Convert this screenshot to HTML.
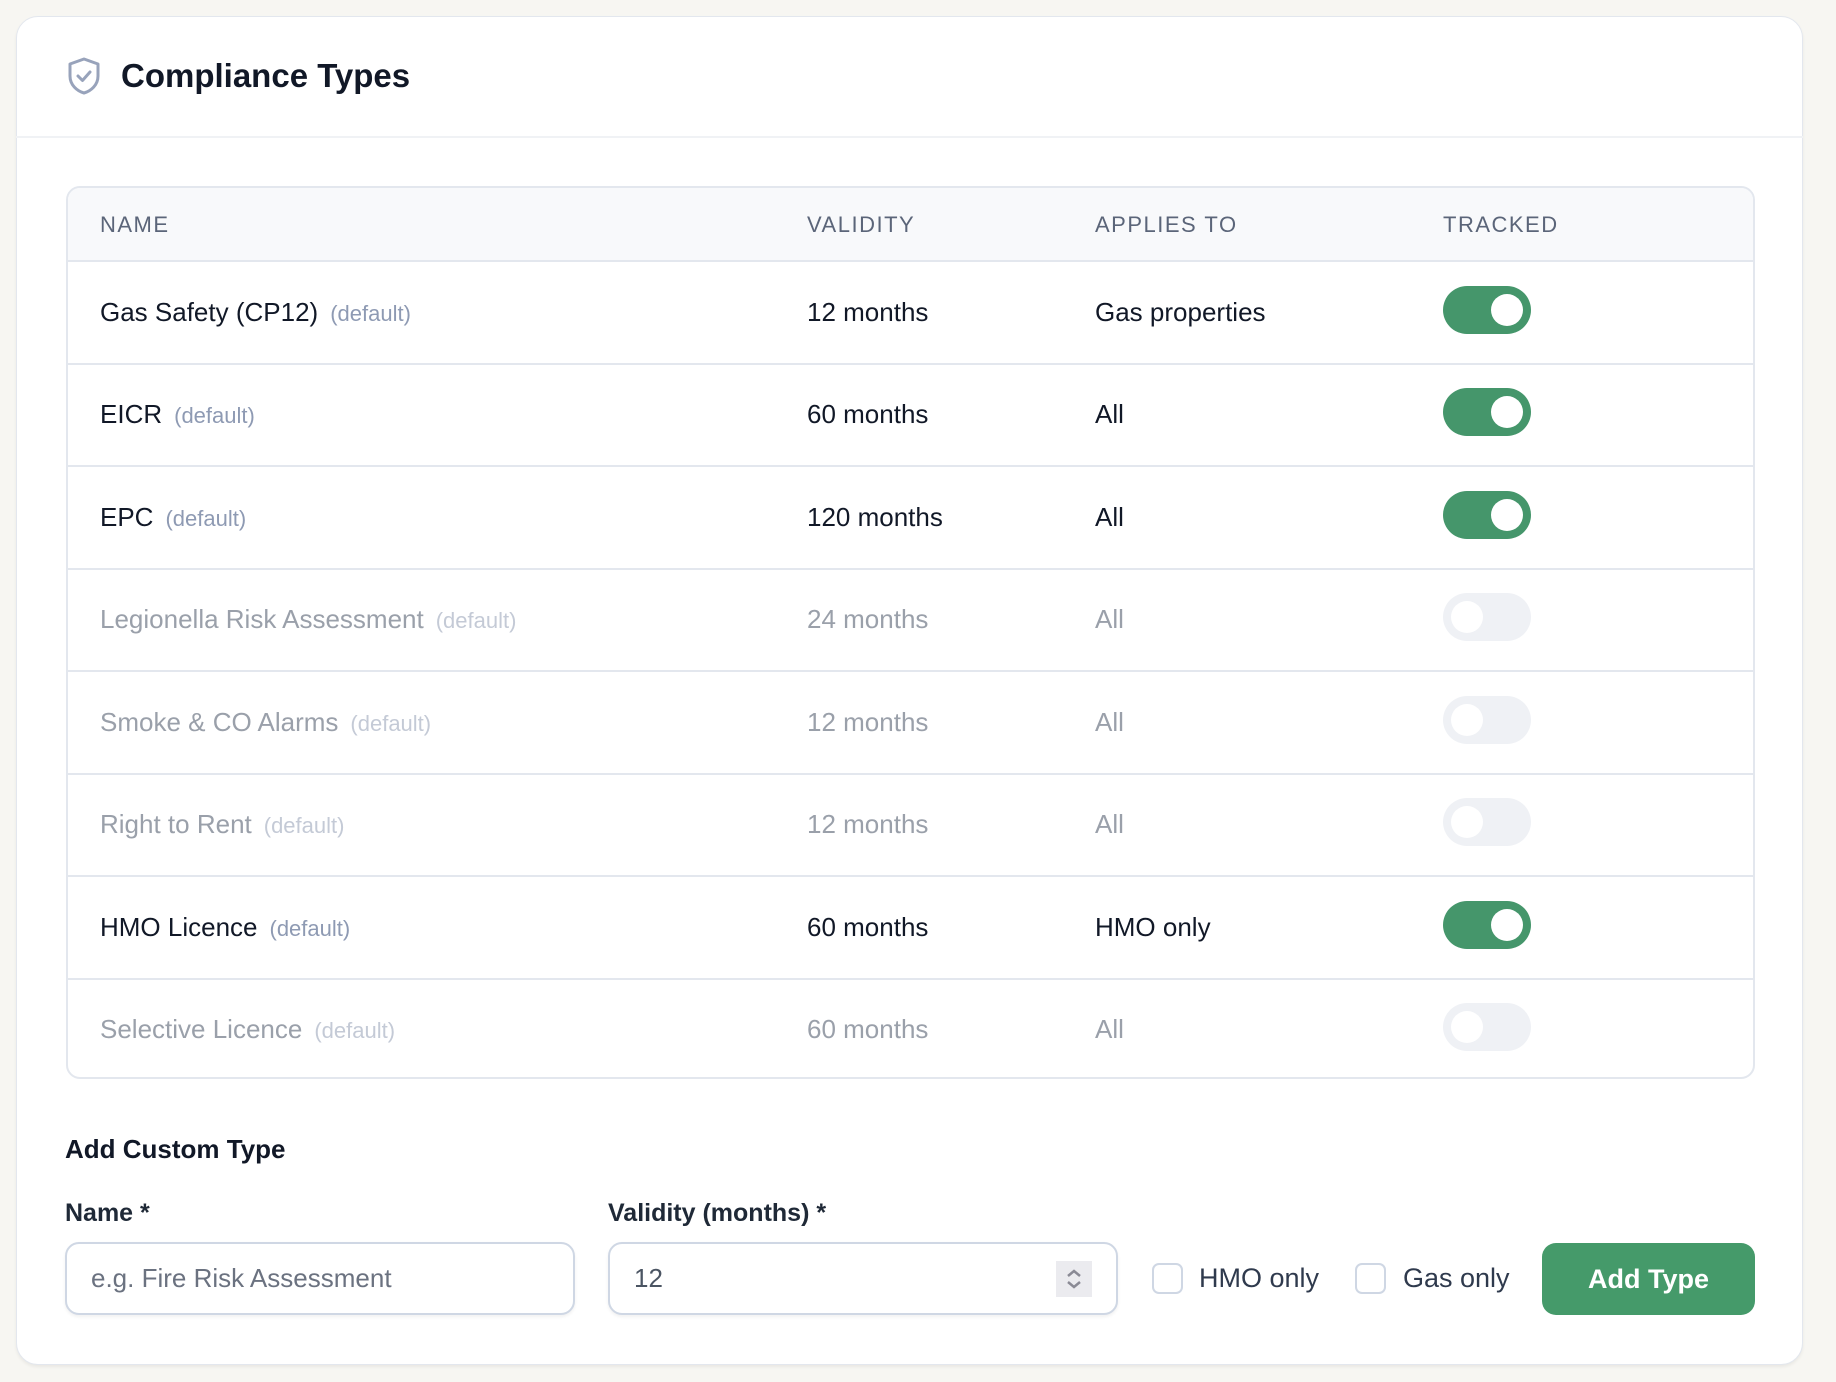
<!DOCTYPE html>
<html><head><meta charset="utf-8"><style>
*{box-sizing:border-box;margin:0;padding:0}
body{width:1836px;height:1382px;background:#f7f6f2;font-family:"Liberation Sans",sans-serif;position:relative;overflow:hidden;color:#111827}
.card{position:absolute;left:16px;top:16px;width:1787px;height:1349px;background:#fff;border:1px solid #e3e7ee;border-radius:22px;box-shadow:0 2px 3px rgba(0,0,0,.06)}
.hdiv{position:absolute;left:16px;top:136px;width:1787px;height:2px;background:#f0f2f5}
.title{position:absolute;left:121px;top:56px;font-size:33px;font-weight:bold;color:#111827;line-height:40px}
.tbl{position:absolute;left:66px;top:186px;width:1689px;height:893px;border:2px solid #e3e7ee;border-radius:14px;overflow:hidden}
.th{position:absolute;left:0;top:0;width:100%;height:74px;background:#f8f9fb;border-bottom:2px solid #e3e7ee}
.hc{position:absolute;top:0;line-height:74px;font-size:22px;letter-spacing:1.5px;color:#5b6579}
.row{position:absolute;left:0;width:100%;height:103px;border-bottom:2px solid #e3e7ee}
.c{position:absolute;top:0;line-height:101px;font-size:26px;color:#111827;white-space:nowrap}
.d{font-size:22px;color:#8e9ab3;margin-left:12px}
.dim .c{color:#9aa0aa}.dim .d{color:#c4cad6}
.tg{position:absolute;left:1375px;top:24px;width:88px;height:48px;border-radius:24px;background:#45966b}
.tg::after{content:"";position:absolute;top:8px;left:48px;width:32px;height:32px;border-radius:50%;background:#fff}
.off{background:#eff1f5}.off::after{left:8px}
.lbl{position:absolute;font-size:25px;font-weight:bold;color:#1f2937}
.inp{position:absolute;top:1242px;height:73px;border:2px solid #cfd7e4;border-radius:14px;background:#fff;box-shadow:0 2px 3px rgba(0,0,0,.06);font-size:26px;line-height:69px;padding-left:24px}
.cb{position:absolute;top:1263px;width:31px;height:31px;border:2px solid #cfd7e4;border-radius:7px}
.ct{position:absolute;top:1258px;font-size:27px;color:#2f3a4d;line-height:40px}
.btn{position:absolute;left:1542px;top:1243px;width:213px;height:72px;border-radius:14px;background:#459a6a;color:#fff;font-size:27px;font-weight:bold;text-align:center;line-height:72px}
</style></head><body>
<div class="card"></div>
<div class="hdiv"></div>
<svg style="position:absolute;left:66px;top:56px" width="36" height="40" viewBox="0 0 36 40"><path d="M18 3 L32 8 V20 C32 29 25 35 18 37 C11 35 4 29 4 20 V8 Z" fill="none" stroke="#98a3bb" stroke-width="3" stroke-linejoin="round"/><path d="M12 20 L16.5 24.5 L24 16" fill="none" stroke="#98a3bb" stroke-width="3" stroke-linecap="round" stroke-linejoin="round"/></svg>
<div class="title">Compliance Types</div>
<div class="tbl">
<div class="th"><div class="hc" style="left:32px">NAME</div><div class="hc" style="left:739px">VALIDITY</div><div class="hc" style="left:1027px">APPLIES TO</div><div class="hc" style="left:1375px">TRACKED</div></div>
<div class="row" style="top:74px"><div class="c" style="left:32px">Gas Safety (CP12)<span class="d">(default)</span></div><div class="c" style="left:739px">12 months</div><div class="c" style="left:1027px">Gas properties</div><div class="tg"></div></div>
<div class="row" style="top:176px"><div class="c" style="left:32px">EICR<span class="d">(default)</span></div><div class="c" style="left:739px">60 months</div><div class="c" style="left:1027px">All</div><div class="tg"></div></div>
<div class="row" style="top:279px"><div class="c" style="left:32px">EPC<span class="d">(default)</span></div><div class="c" style="left:739px">120 months</div><div class="c" style="left:1027px">All</div><div class="tg"></div></div>
<div class="row dim" style="top:381px"><div class="c" style="left:32px">Legionella Risk Assessment<span class="d">(default)</span></div><div class="c" style="left:739px">24 months</div><div class="c" style="left:1027px">All</div><div class="tg off"></div></div>
<div class="row dim" style="top:484px"><div class="c" style="left:32px">Smoke &amp; CO Alarms<span class="d">(default)</span></div><div class="c" style="left:739px">12 months</div><div class="c" style="left:1027px">All</div><div class="tg off"></div></div>
<div class="row dim" style="top:586px"><div class="c" style="left:32px">Right to Rent<span class="d">(default)</span></div><div class="c" style="left:739px">12 months</div><div class="c" style="left:1027px">All</div><div class="tg off"></div></div>
<div class="row" style="top:689px"><div class="c" style="left:32px">HMO Licence<span class="d">(default)</span></div><div class="c" style="left:739px">60 months</div><div class="c" style="left:1027px">HMO only</div><div class="tg"></div></div>
<div class="row dim" style="top:791px;border-bottom:none"><div class="c" style="left:32px">Selective Licence<span class="d">(default)</span></div><div class="c" style="left:739px">60 months</div><div class="c" style="left:1027px">All</div><div class="tg off"></div></div>
</div>
<div class="lbl" style="left:65px;top:1134px;font-size:26px;color:#111827">Add Custom Type</div>
<div class="lbl" style="left:65px;top:1199px">Name *</div>
<div class="lbl" style="left:608px;top:1199px">Validity (months) *</div>
<div class="inp" style="left:65px;width:510px;color:#6b7280">e.g. Fire Risk Assessment</div>
<div class="inp" style="left:608px;width:510px;color:#4b5563">12</div>
<div style="position:absolute;left:1056px;top:1261px;width:36px;height:36px;background:#ebebef"><svg width="36" height="36" viewBox="0 0 36 36"><path d="M12 15 L18 10 L24 15 M12 21 L18 26 L24 21" fill="none" stroke="#8a8a95" stroke-width="2.5"/></svg></div>
<div class="cb" style="left:1152px"></div><div class="ct" style="left:1199px">HMO only</div>
<div class="cb" style="left:1355px"></div><div class="ct" style="left:1403px">Gas only</div>
<div class="btn">Add Type</div>
</body></html>
